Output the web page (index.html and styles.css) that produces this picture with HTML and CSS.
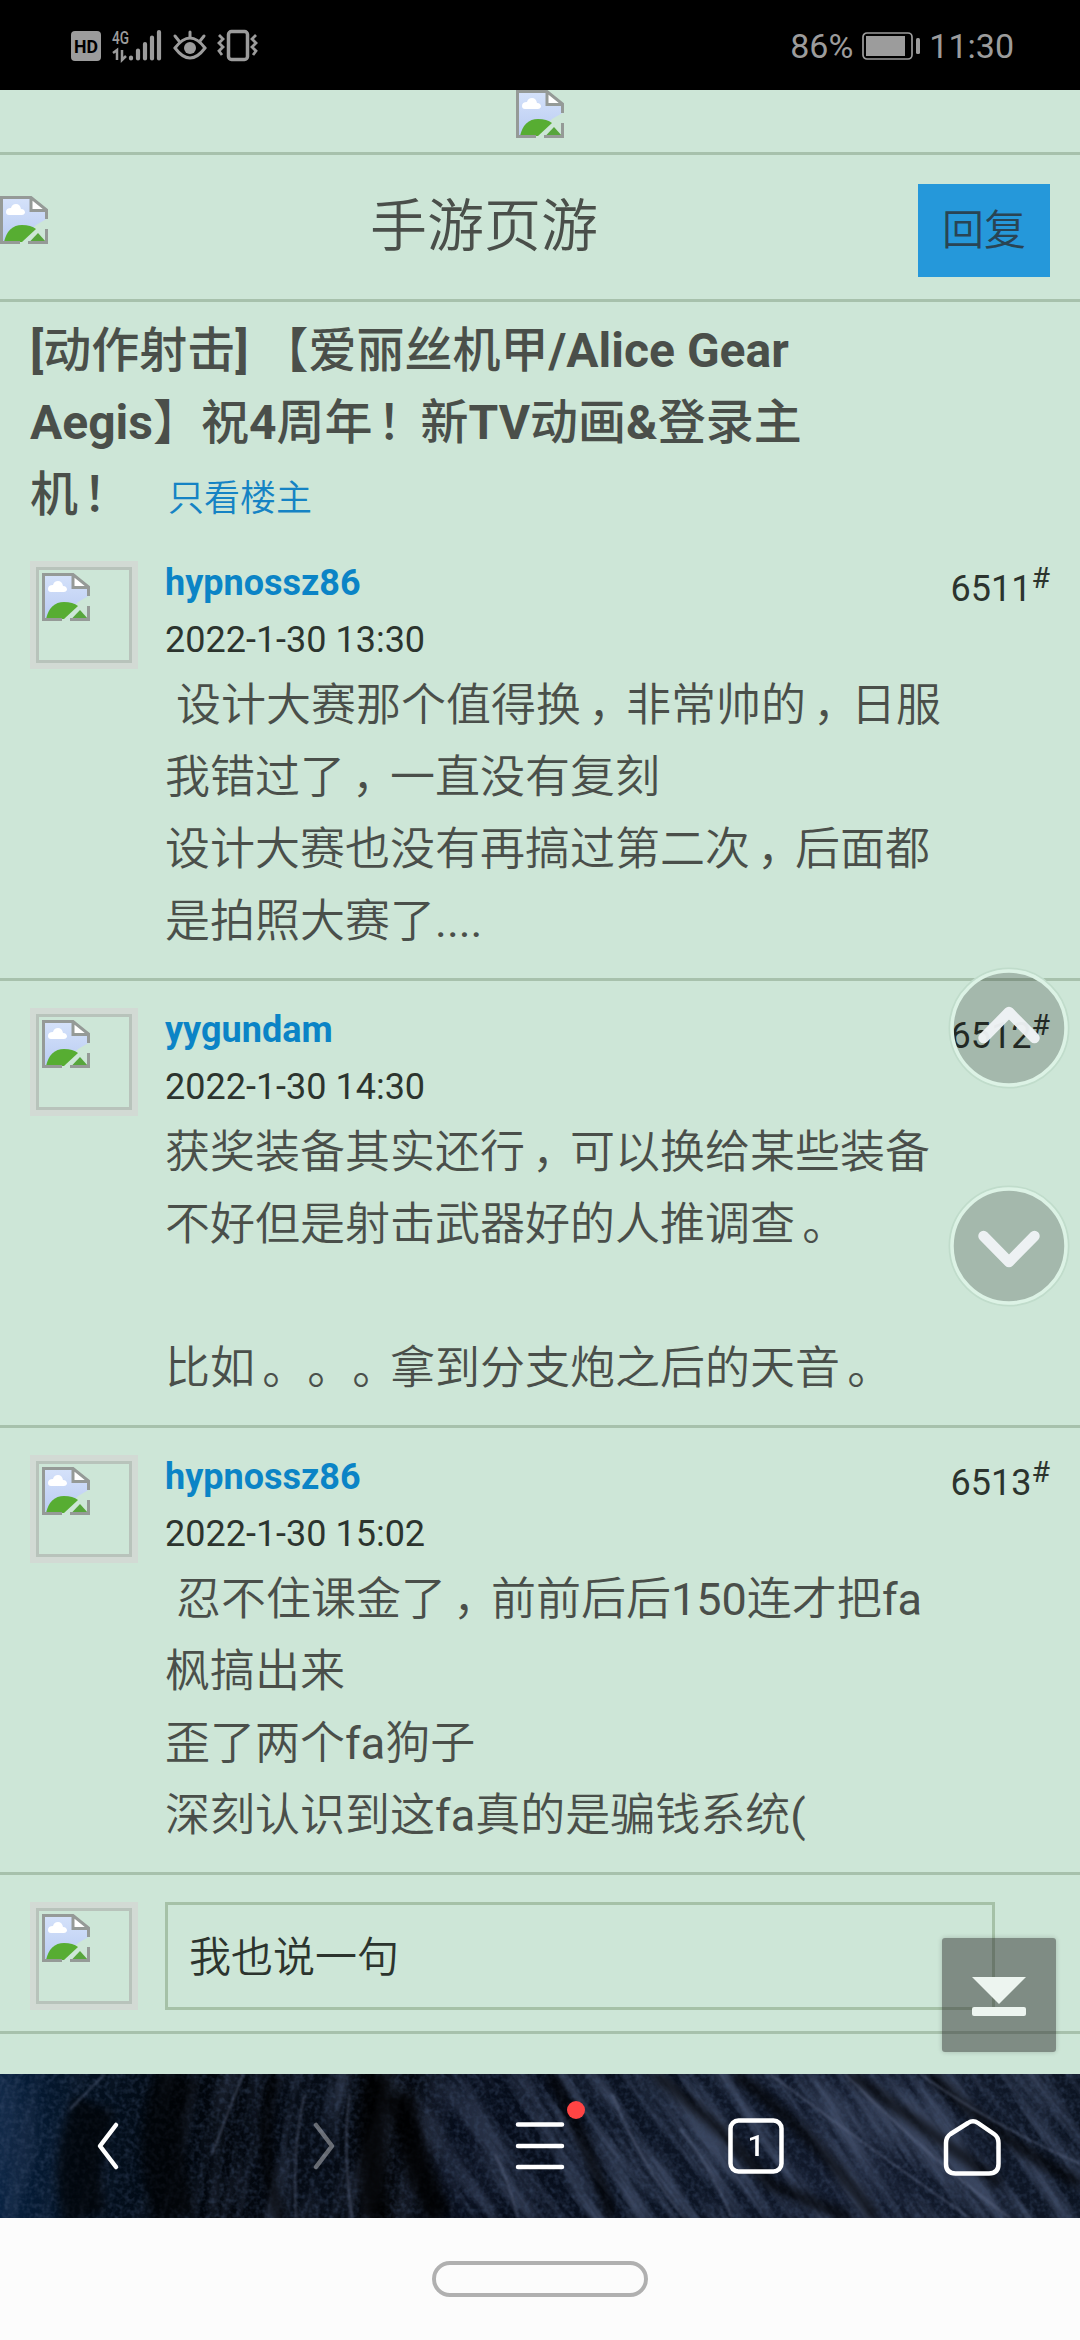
FILE: index.html
```html
<!DOCTYPE html>
<html lang="zh-CN">
<head>
<meta charset="utf-8">
<title>手游页游</title>
<link rel="stylesheet" href="styles.css">
</head>
<body>
<svg width="0" height="0" class="defs">
  <defs>
    <linearGradient id="sky" x1="0" y1="0" x2="0" y2="1"><stop offset="0" stop-color="#d5e2fa"/><stop offset="1" stop-color="#b9cbf2"/></linearGradient>
    <symbol id="broken" viewBox="0 0 48 48">
      <path d="M1.5 1.5H31L46.500 15V23L36 29 20 46.500H1.500Z" fill="url(#sky)"/>
      <path d="M6 16q0-4 5-4 1-4 5-4t5 5q4 0 4 4-1 2-3 2H9q-3 0-3-3Z" fill="#fff"/>
      <path d="M4 46Q8 29 22 29q9 0 14 4L22 46Z" fill="#57ad32"/>
      <path d="M29 46.500 38 37 46.500 46.500Z" fill="#57a53c"/>
      <path d="M32 3 45 14H32Z" fill="#fff"/>
      <path d="M20 46.500H1.500V1.500H31L46.500 14V23M31 2V14.500H46.500M46.500 33V46.500H28" fill="none" stroke="#959a97" stroke-width="3"/>
    </symbol>
  </defs>
</svg>

<header class="status">
  <svg class="status-icons" width="192" height="40" viewBox="66 26 192 40" fill="none" stroke="#9c9c9c">
    <rect x="71" y="31" width="30" height="30" rx="4" fill="#9c9c9c" stroke="none"/>
    <text x="86" y="52.500" class="hd" textLength="24" lengthAdjust="spacingAndGlyphs">HD</text>
    <text x="112" y="43.500" class="net" textLength="17" lengthAdjust="spacingAndGlyphs">4G</text>
    <path d="M113 53l4-3V60M122 50V60l4-4" stroke-width="2.500"/>
    <path d="M131 57.500V58.500M138 50.500V58.500M145 44V58.500M152 37.500V58.500M159 32V58.500" stroke-width="4.200" stroke-linecap="round"/>
    <path d="M175 48q15-20 30 0-15 20-30 0Z" stroke-width="3"/>
    <circle cx="190" cy="48" r="6" fill="#9c9c9c" stroke="none"/>
    <path d="M190 32v5M175 36l4 5M204 36l-4 5" stroke-width="3" stroke-linecap="round"/>
    <rect x="228.500" y="31.500" width="19" height="28" rx="3" stroke-width="3.500"/>
    <path d="M219 35l4 4-4 4 4 4-4 4 3 4M256 35l-4 4 4 4-4 4 4 4-3 4" stroke-width="2.800"/>
  </svg>
  <div class="status-right">
    <span>86%</span>
    <svg class="battery" width="58" height="28" viewBox="0 0 58 28"><rect x="1" y="1" width="49" height="26" rx="4" fill="none" stroke="#9c9c9c" stroke-width="1.700"/><rect x="4" y="4" width="39" height="20" fill="#9c9c9c"/><rect x="54" y="6" width="4" height="16" rx="1.500" fill="#9c9c9c"/></svg>
    <span>11:30</span>
  </div>
</header>

<main class="page">
  <div class="banner"><svg class="broken"><use href="#broken"/></svg></div>
  <nav class="forum">
    <svg class="broken"><use href="#broken"/></svg>
    <h1>手游页游</h1>
    <a class="reply-btn">回复</a>
  </nav>

  <div class="thread"><h2>[<i>动作射击</i>] <i>【爱丽丝机甲</i>/Alice Gear<br>Aegis<i>】祝</i>4<i>周年<b class="pt ex">！</b>新</i>TV<i>动画</i>&amp;<i>登录主</i><br><i>机<b class="pt ex">！</b></i> <a class="only">只看楼主</a></h2></div>

  <article class="post">
    <div class="avatar"><svg class="broken"><use href="#broken"/></svg></div>
    <div class="body">
      <div class="name">hypnossz86</div>
      <div class="date">2022-1-30 13:30</div>
      <p>&nbsp;设计大赛那个值得换<b class="pt">，</b>非常帅的<b class="pt">，</b>日服<br>我错过了<b class="pt">，</b>一直没有复刻<br>设计大赛也没有再搞过第二次<b class="pt">，</b>后面都<br>是拍照大赛了<em>....</em></p>
    </div>
    <div class="floor">6511<sup>#</sup></div>
  </article>
  <article class="post">
    <div class="avatar"><svg class="broken"><use href="#broken"/></svg></div>
    <div class="body">
      <div class="name">yygundam</div>
      <div class="date">2022-1-30 14:30</div>
      <p>获奖装备其实还行<b class="pt">，</b>可以换给某些装备<br>不好但是射击武器好的人推调查<b class="pt">。</b><br><br>比如<b class="pt">。</b><b class="pt">。</b><b class="pt">。</b>拿到分支炮之后的天音<b class="pt">。</b></p>
    </div>
    <div class="floor">6512<sup>#</sup></div>
  </article>
  <article class="post">
    <div class="avatar"><svg class="broken"><use href="#broken"/></svg></div>
    <div class="body">
      <div class="name">hypnossz86</div>
      <div class="date">2022-1-30 15:02</div>
      <p>&nbsp;忍不住课金了<b class="pt">，</b>前前后后<em>150</em>连才把<em>fa</em><br>枫搞出来<br>歪了两个<em>fa</em>狗子<br>深刻认识到这<em>fa</em>真的是骗钱系统<em>(</em></p>
    </div>
    <div class="floor">6513<sup>#</sup></div>
  </article>

  <div class="quick">
    <div class="avatar"><svg class="broken"><use href="#broken"/></svg></div>
    <div class="field">我也说一句</div>
  </div>
</main>

<svg class="float up" width="124" height="124" viewBox="-62 -62 124 124"><circle r="59.500" class="halo"/><circle r="57" class="disc"/><path d="M-25.500 10 0-16 25.500 10"/></svg>
<svg class="float down" width="124" height="124" viewBox="-62 -62 124 124"><circle r="59.500" class="halo"/><circle r="57" class="disc"/><path d="M-25.500-10 0 16 25.500-10"/></svg>
<svg class="to-bottom" width="114" height="114" viewBox="0 0 114 114"><path d="M30 39H84L57 66Z"/><rect x="30" y="69" width="54" height="9" rx="2"/></svg>

<footer class="toolbar">
  <svg class="wall" width="1080" height="144" viewBox="0 0 1080 144" preserveAspectRatio="none">
    <defs>
      <linearGradient id="base"><stop offset="0" stop-color="#06203f"/><stop offset=".08" stop-color="#03101f"/><stop offset=".2" stop-color="#02060c"/><stop offset=".3" stop-color="#060c16"/><stop offset=".36" stop-color="#010306"/><stop offset=".42" stop-color="#040a17"/><stop offset=".6" stop-color="#0b1322"/><stop offset=".8" stop-color="#131b2d"/><stop offset="1" stop-color="#0c1422"/></linearGradient>
      <linearGradient id="fadeL"><stop offset="0" stop-color="#777"/><stop offset=".12" stop-color="#444"/><stop offset=".26" stop-color="#fff"/><stop offset=".33" stop-color="#fff"/><stop offset=".45" stop-color="#000"/></linearGradient>
      <linearGradient id="fadeR"><stop offset=".34" stop-color="#000"/><stop offset=".5" stop-color="#fff"/></linearGradient>
      <mask id="ml" maskUnits="userSpaceOnUse" x="0" y="0" width="1080" height="144"><rect width="1080" height="144" fill="url(#fadeL)"/></mask>
      <mask id="mr" maskUnits="userSpaceOnUse" x="0" y="0" width="1080" height="144"><rect width="1080" height="144" fill="url(#fadeR)"/></mask>
      <filter id="grain" x="0" y="0" width="100%" height="100%" color-interpolation-filters="sRGB"><feTurbulence type="fractalNoise" baseFrequency=".045 .007" numOctaves="4" seed="8"/><feColorMatrix values="0 0 0 0 .3  0 0 0 0 .35  0 0 0 0 .46  3 0 0 0 -1.200"/></filter>
      <filter id="speck" x="0" y="0" width="100%" height="100%" color-interpolation-filters="sRGB"><feTurbulence type="fractalNoise" baseFrequency=".2" numOctaves="2" seed="3"/><feColorMatrix values="0 0 0 0 .25  0 0 0 0 .32  0 0 0 0 .44  1.500 0 0 0 -.6"/></filter>
      <filter id="soft" x="-20%" y="-20%" width="140%" height="140%"><feGaussianBlur stdDeviation="5"/></filter>
      <filter id="fine" x="-5%" y="-5%" width="110%" height="110%"><feGaussianBlur stdDeviation="1.200"/></filter>
    </defs>
    <rect width="1080" height="144" fill="url(#base)"/>
    <g mask="url(#ml)"><rect x="-20" width="640" height="144" transform="skewX(-10)" filter="url(#grain)" opacity=".45"/></g>
    <g mask="url(#mr)"><rect x="150" width="950" height="144" transform="skewX(35)" filter="url(#grain)" opacity=".7"/></g>
    <rect width="1080" height="144" filter="url(#speck)" opacity=".6"/>
    <g fill="none" stroke="#000106" filter="url(#soft)">
      <path d="M378 0Q368 70 376 144M400 20Q410 80 440 144" stroke-width="26" opacity=".8"/>
      <path d="M180 0Q150 60 175 144M95 30Q70 90 85 144" stroke-width="44" opacity=".6"/>
      <path d="M550 0Q585 60 612 144M655 0Q730 60 770 110L850 144M735 0Q815 60 875 144M850 0Q920 50 1000 110M930 0Q990 60 1080 110M275 0Q255 70 280 144" stroke-width="9" opacity=".8"/>
    </g>
    <g fill="none" stroke="#66718c" stroke-width="2.500" opacity=".4" filter="url(#fine)"><path d="M612 20Q640 90 685 144M680 55Q710 90 732 144M770 0Q870 75 970 144M845 0Q930 85 1010 144M920 0Q990 50 1080 90M243 0 212 80M305 20Q292 70 296 144M350 20Q342 70 352 144M495 80Q510 110 518 144M105 0 70 35"/></g>
  </svg>
  <svg class="ico" viewBox="0 0 216 144"><path d="M116 51 100 72 116 93"/></svg>
  <svg class="ico dim" viewBox="0 0 216 144"><path d="M100 51 116 72 100 93"/></svg>
  <svg class="ico" viewBox="0 0 216 144"><path d="M86 50.500H130M86 72H130M86 93H130"/><circle cx="144" cy="36" r="9" class="dot"/></svg>
  <svg class="ico" viewBox="0 0 216 144"><rect x="82.500" y="46.500" width="51" height="51" rx="8"/><text x="108" y="82" class="count">1</text></svg>
  <svg class="ico" viewBox="0 0 216 144"><path d="M104 49Q109 45.500 114 49L130 60Q134.500 63 134.500 69V90Q134.500 99.500 125 99.500H91.500Q82 99.500 82 90V69Q82 63 86.500 60Z"/></svg>
</footer>
<div class="gesture"><div class="pill"></div></div>
</body>
</html>
```
FILE: styles.css
```css
* { box-sizing: border-box; margin: 0; padding: 0; }
body { width: 1080px; height: 2340px; position: relative; overflow: hidden; background: #cde6d7; font-family: Roboto, "Noto Sans CJK SC", sans-serif; color: #4a4f4a; text-spacing-trim: space-all; }
i, em { font-style: normal; }
em { font-weight: 400; }
/* half-width punctuation, padded back to a full em */
.pt { font-weight: inherit; font-feature-settings: "halt"; padding: 0 .34em 0 .16em; }
.pt.ex { padding: 0 .4em 0 .1em; }
.defs { position: absolute; }
.broken { display: block; width: 48px; height: 48px; flex: none; }

.status { height: 90px; background: #000; color: #9c9c9c; display: flex; justify-content: space-between; align-items: center; padding: 2px 66px 0; }
.hd { font: 700 19px Roboto, sans-serif; fill: #000; stroke: none; text-anchor: middle; }
.net { font: 500 19px Roboto, sans-serif; fill: #9c9c9c; stroke: none; }
.status-right { display: flex; align-items: center; font-size: 34px; }
.battery { margin: 0 9px; }

.page { height: 1984px; }
.banner { height: 65px; border-bottom: 3px solid #a7c1ac; display: flex; justify-content: center; }
.forum { height: 147px; border-bottom: 3px solid #a7c1ac; display: grid; grid-template-columns: 48px 1fr 132px; align-items: start; padding: 0 30px 0 0; }
.forum .broken { margin-top: 41px; }
.forum h1 { font-size: 57px; font-family: "Noto Sans CJK SC DemiLight", "Noto Sans CJK SC", sans-serif; font-weight: 350; line-height: 72px; margin-top: 30px; padding-left: 322px; }
.reply-btn { margin-top: 29px; height: 93px; background: #2598da; color: #294454; font-size: 42px; line-height: 93px; text-align: center; font-weight: 350; }

.thread { height: 232px; padding: 13px 0 0 30px; }
.thread h2 { font-size: 48px; line-height: 72px; font-weight: 700; white-space: nowrap; }
.thread i { font-weight: 500; }
.thread .only { font-size: 36px; font-weight: 350; color: #1583c4; margin-left: 30px; }

.post { height: 447px; border-bottom: 3px solid #a7c1ac; display: grid; grid-template-columns: 108px 1fr auto; column-gap: 27px; padding: 21px 30px 0; }
.avatar { width: 108px; height: 108px; border: 6px solid #d2dad4; padding: 3px; outline: 3px solid #b8c3bb; outline-offset: -9px; }
.avatar .broken { margin: 3px; }
.post .avatar { margin-top: 6px; }
.name, .date { height: 57px; line-height: 57px; font-size: 36px; white-space: nowrap; }
.name { font-weight: 700; color: #0b84c6; }
.date, .floor { color: #2c342e; }
.post p { font-size: 45px; line-height: 72px; white-space: nowrap; font-weight: 350; padding-top: 1px; }
.body { width: 0; }
.floor { font-size: 36px; line-height: 57px; padding-top: 6px; }
.floor sup { font-size: 30px; line-height: 0; vertical-align: 13px; }

.quick { height: 159px; border-bottom: 3px solid #a7c1ac; display: grid; grid-template-columns: 108px 830px; column-gap: 27px; padding: 27px 30px 0; }
.field { height: 108px; border: 3px solid #a5c1a7; padding-left: 21px; font-size: 42px; line-height: 106px; color: #2c342e; font-weight: 350; }

.float { position: absolute; left: 947px; }
.up { top: 966px; }
.down { top: 1184px; }
.halo { fill: none; stroke: #c0dccb; stroke-width: 2; }
.disc { fill: rgba(0, 0, 0, .2); stroke: #dcf2e5; stroke-width: 3.5; }
.float path { fill: none; stroke: #eff4f6; stroke-width: 10.5; stroke-linecap: round; stroke-linejoin: round; opacity: .96; }
.to-bottom { position: absolute; left: 942px; top: 1938px; background: rgba(50, 50, 50, .5); border-radius: 3px; box-shadow: 0 0 5px rgba(0, 0, 0, .2); fill: #edf5f0; }

.toolbar { height: 144px; position: relative; display: grid; grid-template-columns: repeat(5, 216px); }
.wall { position: absolute; inset: 0; }
.ico { position: relative; width: 216px; height: 144px; fill: none; stroke: #fff; stroke-width: 4.5; stroke-linecap: round; stroke-linejoin: round; }
.dim { opacity: .38; }
.dot { fill: #ff4444; stroke: none; }
.count { font: 500 30px Roboto, sans-serif; fill: #fff; stroke: none; text-anchor: middle; }
.gesture { height: 122px; background: #fcfcfc; display: flex; justify-content: center; padding-top: 43px; }
.pill { width: 216px; height: 36px; border: 4.5px solid #b0b0b0; border-radius: 18px; }
```
